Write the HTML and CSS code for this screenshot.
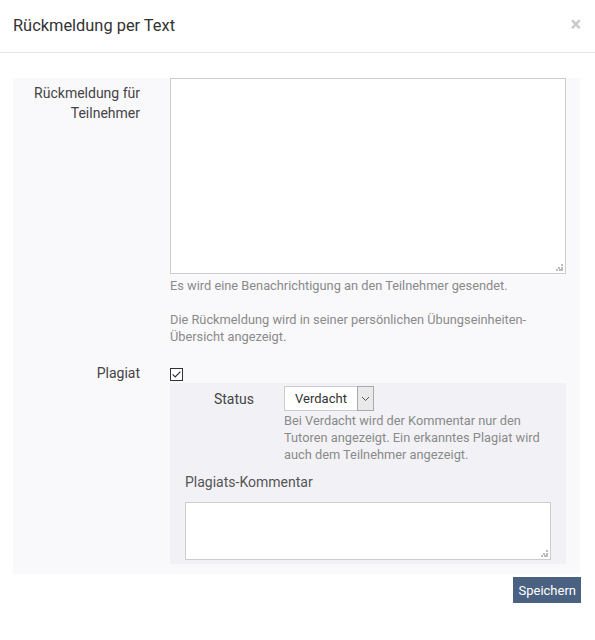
FILE: index.html
```html
<!DOCTYPE html>
<html>
<head>
  <title>Rückmeldung per Text</title>
  <link rel="stylesheet" href="styles.css">
</head>
<body>
  <div class="modal">
    <div class="modal-header">
      <h4 class="modal-title">Rückmeldung per Text</h4>
      <span class="close">&times;</span>
    </div>

    <div class="modal-body">
      <form class="feedback-form">
        <div class="form-row">
          <label class="form-label label-multi">Rückmeldung für Teilnehmer</label>
          <div class="form-control">
            <div class="textarea-wrap">
              <textarea class="feedback-text"></textarea>
              <span class="grip"></span>
            </div>
            <p class="help">Es wird eine Benachrichtigung an den Teilnehmer gesendet.</p>
            <p class="help">Die Rückmeldung wird in seiner persönlichen Übungseinheiten-Übersicht angezeigt.</p>
          </div>
        </div>

        <div class="form-row plagiat-row">
          <label class="form-label">Plagiat</label>
          <div class="form-control">
            <span class="checkbox">
              <svg width="13" height="13" viewBox="0 0 13 13">
                <rect x="0.5" y="0.5" width="12" height="12" fill="#fff" stroke="#333"/>
                <path d="M2.6 6.4 L5.2 9 L10.4 3.6" fill="none" stroke="#333" stroke-width="1.2"/>
              </svg>
            </span>
            <div class="sub-panel">
              <div class="sub-row">
                <label class="sub-label">Status</label>
                <div class="sub-control">
                  <div class="select">
                    <span class="select-value">Verdacht</span>
                    <span class="select-arrow">
                      <svg width="9" height="6" viewBox="0 0 9 6">
                        <path d="M1 1 L4.5 4.5 L8 1" fill="none" stroke="#555" stroke-width="1"/>
                      </svg>
                    </span>
                  </div>
                  <p class="help">Bei Verdacht wird der Kommentar nur den Tutoren angezeigt. Ein erkanntes Plagiat wird auch dem Teilnehmer angezeigt.</p>
                </div>
              </div>
              <label class="comment-label">Plagiats-Kommentar</label>
              <div class="textarea-wrap">
                <textarea class="comment-text"></textarea>
                <span class="grip"></span>
              </div>
            </div>
          </div>
        </div>
      </form>

      <div class="actions">
        <button type="button" class="btn-save">Speichern</button>
      </div>
    </div>
  </div>
</body>
</html>
```

FILE: styles.css
```css
body {
  margin: 0;
  font-family: Roboto, "Liberation Sans", Arial, sans-serif;
  color: #444;
  background: #fff;
}
.modal-header {
  display: flex;
  justify-content: space-between;
  align-items: center;
  padding: 15px 14px 15px 13px;
  border-bottom: 1px solid #e5e5e5;
}
.modal-title {
  margin: 0;
  font-size: 16.4px;
  font-weight: normal;
  line-height: 22px;
  color: #333;
}
.close {
  font-size: 20px;
  font-weight: bold;
  line-height: 22px;
  color: #c8c8c8;
  margin-top: -4px;
}
.modal-body {
  padding: 25px 15px 0 13px;
}
.feedback-form {
  background-color: #f9f9fb;
  padding: 0 14px 10px 0;
}
.form-row {
  display: grid;
  grid-template-columns: 127px 1fr;
  column-gap: 30px;
}
.form-label {
  text-align: right;
  font-size: 14px;
  line-height: 20px;
  color: #444;
}
.label-multi {
  padding-top: 5px;
}
.textarea-wrap {
  position: relative;
}
textarea {
  display: block;
  box-sizing: border-box;
  width: 100%;
  border: 1px solid #ccc;
  background: #fff;
  resize: none;
  margin: 0;
}
.feedback-text {
  height: 196px;
}
.grip {
  position: absolute;
  right: 3px;
  bottom: 3px;
  width: 7px;
  height: 7px;
  background:
    linear-gradient(#bbb, #bbb) 5px 0 / 2px 2px no-repeat,
    linear-gradient(#bbb, #bbb) 2px 3px / 2px 2px no-repeat,
    linear-gradient(#bbb, #bbb) 5px 3px / 2px 2px no-repeat,
    linear-gradient(#bbb, #bbb) 0 5px / 2px 2px no-repeat,
    linear-gradient(#bbb, #bbb) 3px 5px / 2px 2px no-repeat,
    linear-gradient(#bbb, #bbb) 5px 5px / 2px 2px no-repeat;
}
.help {
  margin: 3px 0 17px 0;
  font-size: 12.8px;
  line-height: 17px;
  color: #8a8a8a;
}
.help:last-child {
  margin-bottom: 0;
}
.plagiat-row {
  margin-top: 18px;
}
.checkbox {
  display: block;
  height: 20px;
  padding-top: 5px;
  box-sizing: border-box;
}
.checkbox svg {
  display: block;
}
.sub-panel {
  background-color: #f2f2f6;
  padding: 3px 15px 4px 15px;
}
.sub-row {
  display: grid;
  grid-template-columns: 84px 1fr;
  column-gap: 15px;
}
.sub-label {
  text-align: right;
  padding-right: 15px;
  font-size: 14px;
  line-height: 20px;
  padding-top: 3px;
  color: #444;
}
.sub-control .help {
  margin-top: 1px;
}
.select {
  display: flex;
  width: 90px;
  height: 25px;
  box-sizing: border-box;
  border: 1px solid #ccc;
  background: #fff;
}
.select-value {
  flex: 1;
  text-align: center;
  font-size: 13px;
  line-height: 23px;
  color: #333;
}
.select-arrow {
  display: flex;
  align-items: center;
  justify-content: center;
  width: 17px;
  margin: -1px -1px -1px 0;
  height: 25px;
  box-sizing: border-box;
  background: #e9e9e9;
  border: 1px solid #aaa;
}
.comment-label {
  display: block;
  margin-top: 9px;
  font-size: 14px;
  line-height: 20px;
  color: #555;
}
.comment-text {
  margin-top: 10px;
  height: 58px;
}
.actions {
  display: flex;
  justify-content: flex-end;
  padding-top: 3px;
  margin-right: -1px;
}
.btn-save {
  padding: 0 5px;
  height: 26px;
  background-color: #4b6182;
  color: #fff;
  border: none;
  font-family: Roboto, "Liberation Sans", Arial, sans-serif;
  font-size: 13px;
  cursor: pointer;
}
```
